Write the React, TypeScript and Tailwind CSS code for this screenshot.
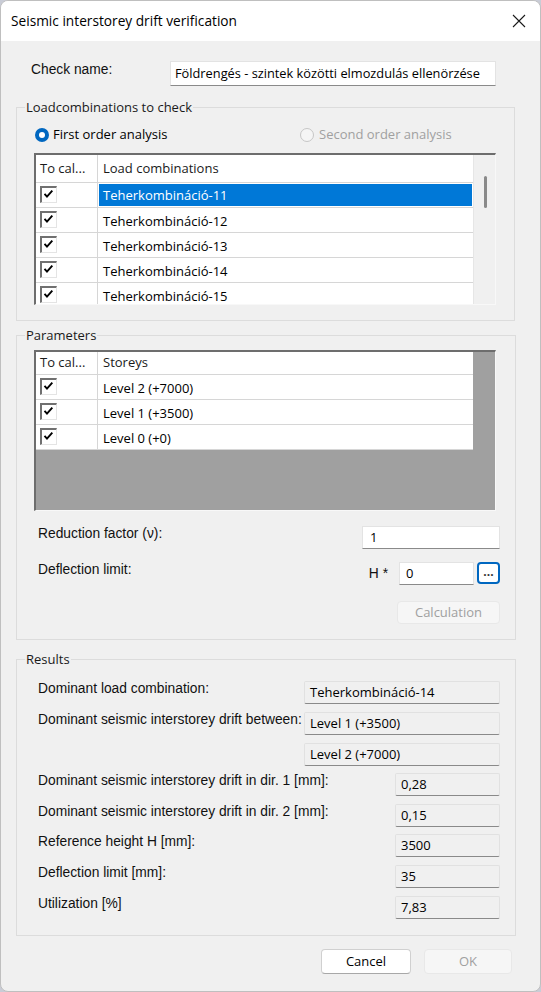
import React from 'react'

const SEG = "font-['Open_Sans','Noto_Sans',sans-serif]"
const MS = "font-['Liberation_Sans',Arial,sans-serif]"

const loadCombos = [
  'Teherkombináció-11',
  'Teherkombináció-12',
  'Teherkombináció-13',
  'Teherkombináció-14',
  'Teherkombináció-15',
]

const storeys = ['Level 2 (+7000)', 'Level 1 (+3500)', 'Level 0 (+0)']

function CheckBox() {
  return (
    <span className="flex h-[17px] w-[17px] items-start border-t-2 border-l-2 border-r border-b border-t-[#707070] border-l-[#707070] border-r-[#e4e4e4] border-b-[#e4e4e4] bg-white">
      <svg width="11" height="10" viewBox="0 0 11 10" className="ml-[1px] mt-[1px]">
        <path d="M1.5 4.8 L4 7.6 L9.3 1.6" stroke="#000" strokeWidth="1.9" fill="none" />
      </svg>
    </span>
  )
}

function GridRow({ text, selected }: { text: string; selected?: boolean }) {
  return (
    <div className="flex h-[25px] shrink-0 border-b border-[#d6d6d6] bg-white">
      <div className="w-[62px] border-r border-[#d6d6d6] pl-[4px] pt-[3px]">
        <CheckBox />
      </div>
      <div className="flex-1 p-[1px]">
        {selected ? (
          <div className="h-full bg-[#0078d7] pl-[4px] leading-[22px] text-white">{text}</div>
        ) : (
          <div className="pl-[4px] leading-[24px] text-black">{text}</div>
        )}
      </div>
    </div>
  )
}

function GridHeader({ title, height }: { title: string; height: string }) {
  return (
    <div className={`flex shrink-0 border-b border-[#d6d6d6] bg-white ${height}`}>
      <div className="flex w-[62px] items-center border-r border-[#d6d6d6] pl-[4px] text-[#1a1a1a]">To cal...</div>
      <div className="flex flex-1 items-center pl-[5px] text-[#1a1a1a]">{title}</div>
    </div>
  )
}

function Legend({ text }: { text: string }) {
  return (
    <legend className={`${SEG} ml-[8px] px-[1px] text-[13px] leading-[16px] text-[#1a1a1a]`}>{text}</legend>
  )
}

function ReadBox({ value, wide }: { value: string; wide?: boolean }) {
  return (
    <div
      className={`${SEG} h-[23px] shrink-0 rounded-[2px] border border-[#e1e1e1] border-b-[#8a8a8a] bg-[#f0f0f0] pl-[5px] text-[13px] leading-[21px] text-black ${
        wide ? 'w-[196px]' : 'w-[105px]'
      }`}
    >
      {value}
    </div>
  )
}

function ResultRow({ label, value, wide, top }: { label?: string; value: string; wide?: boolean; top: string }) {
  return (
    <div className={`flex items-start justify-between pl-[21px] pr-[15px] ${top}`}>
      <span className={`${MS} whitespace-nowrap text-[13.8px] leading-[16px] text-[#111]`}>{label}</span>
      <ReadBox value={value} wide={wide} />
    </div>
  )
}

export default function App() {
  return (
    <div className="h-[992px] w-[541px] bg-[#c9ccd6]">
      <div className="flex h-full w-full flex-col overflow-hidden rounded-[8px] border border-[#bfbfbf] bg-[#f0f0f0]">
        {/* Title bar */}
        <div className="flex h-[40px] shrink-0 items-center justify-between bg-white pl-[10px] pr-[14px]">
          <span className={`${SEG} text-[13.7px] text-black`}>Seismic interstorey drift verification</span>
          <svg width="14" height="14" viewBox="0 0 14 14">
            <path d="M1 1 L13 13 M13 1 L1 13" stroke="#1a1a1a" strokeWidth="1.1" />
          </svg>
        </div>

        {/* Check name */}
        <div className="mt-[20px] flex items-start">
          <span className={`${MS} ml-[30px] mt-[1px] w-[139px] text-[13.8px] leading-[16px] text-[#111]`}>Check name:</span>
          <div
            className={`${SEG} h-[25px] w-[326px] border border-[#e3e3e3] border-b-[#8a8a8a] bg-white pl-[4px] text-[12.8px] leading-[23px] text-black`}
          >
            Földrengés - szintek közötti elmozdulás ellenörzése
          </div>
        </div>

        {/* Loadcombinations */}
        <fieldset className={`${SEG} ml-[15px] mt-[13px] w-[499px] border border-[#dcdcdc] text-[13px]`}>
          <Legend text="Loadcombinations to check" />
          <div className="ml-[18px] mt-[12px] flex h-[16px] items-center">
            <div className="flex w-[265px] items-center">
              <span className="flex h-[14px] w-[14px] items-center justify-center rounded-full bg-[#0067c0]">
                <span className="h-[6px] w-[6px] rounded-full bg-white" />
              </span>
              <span className="ml-[4px] text-black">First order analysis</span>
            </div>
            <span className="h-[14px] w-[14px] rounded-full border border-[#c6c6c6] bg-[#f5f5f5]" />
            <span className="ml-[5px] text-[#a0a0a0]">Second order analysis</span>
          </div>
          <div className="ml-[17px] mt-[10px] flex h-[152px] w-[462px] overflow-hidden border-t-2 border-l-2 border-r border-b border-t-[#6d6d6d] border-l-[#6d6d6d] border-r-[#f8f8f8] border-b-[#f8f8f8] bg-[#f0f0f0]">
            <div className="flex w-[437px] flex-col bg-white">
              <GridHeader title="Load combinations" height="h-[28px]" />
              {loadCombos.map((c, i) => (
                <GridRow key={c} text={c} selected={i === 0} />
              ))}
            </div>
            <div className="flex-1 border-l border-[#e6e6e6] pl-[10px] pt-[21px]">
              <div className="h-[32px] w-[3px] rounded-full bg-[#8a8a8a]" />
            </div>
          </div>
          <div className="h-[15px]" />
        </fieldset>

        {/* Parameters */}
        <fieldset className={`${SEG} ml-[15px] mt-[6px] w-[500px] border border-[#dcdcdc] text-[13px]`}>
          <Legend text="Parameters" />
          <div className="ml-[17px] mt-[7px] flex h-[161px] w-[462px] overflow-hidden border-t-2 border-l-2 border-r border-b border-t-[#6d6d6d] border-l-[#6d6d6d] border-r-[#f8f8f8] border-b-[#f8f8f8] bg-[#a0a0a0]">
            <div className="flex w-[437px] flex-col">
              <GridHeader title="Storeys" height="h-[23px]" />
              {storeys.map((s) => (
                <GridRow key={s} text={s} />
              ))}
            </div>
          </div>

          <div className="mt-[15px] flex items-start justify-between pl-[21px] pr-[15px]">
            <span className={`${MS} text-[13.8px] leading-[16px] text-[#111]`}>Reduction factor (ν):</span>
            <div className="h-[23px] w-[138px] border border-[#e3e3e3] border-b-[#8a8a8a] bg-white pl-[7px] leading-[21px] text-black">
              1
            </div>
          </div>

          <div className="mt-[13px] flex items-start justify-between pl-[21px] pr-[15px]">
            <span className={`${MS} text-[13.8px] leading-[16px] text-[#111]`}>Deflection limit:</span>
            <div className="flex items-start">
              <span className={`${MS} mr-[11px] mt-[4px] text-[13.8px] leading-[16px] text-[#111]`}>H *</span>
              <div className="h-[23px] w-[75px] border border-[#e3e3e3] border-b-[#8a8a8a] bg-white pl-[6px] leading-[21px] text-black">
                0
              </div>
              <div className="ml-[3px] flex h-[22px] w-[23px] items-center justify-center rounded-[4px] border-2 border-[#0067c0] bg-white pb-[3px] text-[12px] font-bold leading-none text-[#333]">
                ...
              </div>
            </div>
          </div>

          <div className="mt-[16px] flex justify-end pr-[15px]">
            <div className="flex h-[23px] w-[103px] items-center justify-center rounded-[4px] border border-[#e8e8e8] bg-[#f6f6f6] text-[#a0a0a0]">
              Calculation
            </div>
          </div>
          <div className="h-[15px]" />
        </fieldset>

        {/* Results */}
        <fieldset className={`${SEG} ml-[15px] mt-[11px] w-[500px] border border-[#dcdcdc] text-[13px]`}>
          <Legend text="Results" />
          <ResultRow top="mt-[14px]" label="Dominant load combination:" value="Teherkombináció-14" wide />
          <ResultRow top="mt-[8px]" label="Dominant seismic interstorey drift between:" value="Level 1 (+3500)" wide />
          <ResultRow top="mt-[8px]" value="Level 2 (+7000)" wide />
          <ResultRow top="mt-[7px]" label="Dominant seismic interstorey drift in dir. 1 [mm]:" value="0,28" />
          <ResultRow top="mt-[8px]" label="Dominant seismic interstorey drift in dir. 2 [mm]:" value="0,15" />
          <ResultRow top="mt-[7px]" label="Reference height H [mm]:" value="3500" />
          <ResultRow top="mt-[8px]" label="Deflection limit [mm]:" value="35" />
          <ResultRow top="mt-[8px]" label="Utilization [%]" value="7,83" />
          <div className="h-[16px]" />
        </fieldset>

        {/* Buttons */}
        <div className={`${SEG} mt-[13px] flex justify-end gap-[13px] pr-[28px] text-[13px]`}>
          <div className="flex h-[25px] w-[90px] items-center justify-center rounded-[4px] border border-[#d0d0d0] border-b-[#a8a8a8] bg-white text-black">
            Cancel
          </div>
          <div className="flex h-[25px] w-[88px] items-center justify-center rounded-[4px] border border-[#e8e8e8] bg-[#f6f6f6] text-[#a0a0a0]">
            OK
          </div>
        </div>
      </div>
    </div>
  )
}
